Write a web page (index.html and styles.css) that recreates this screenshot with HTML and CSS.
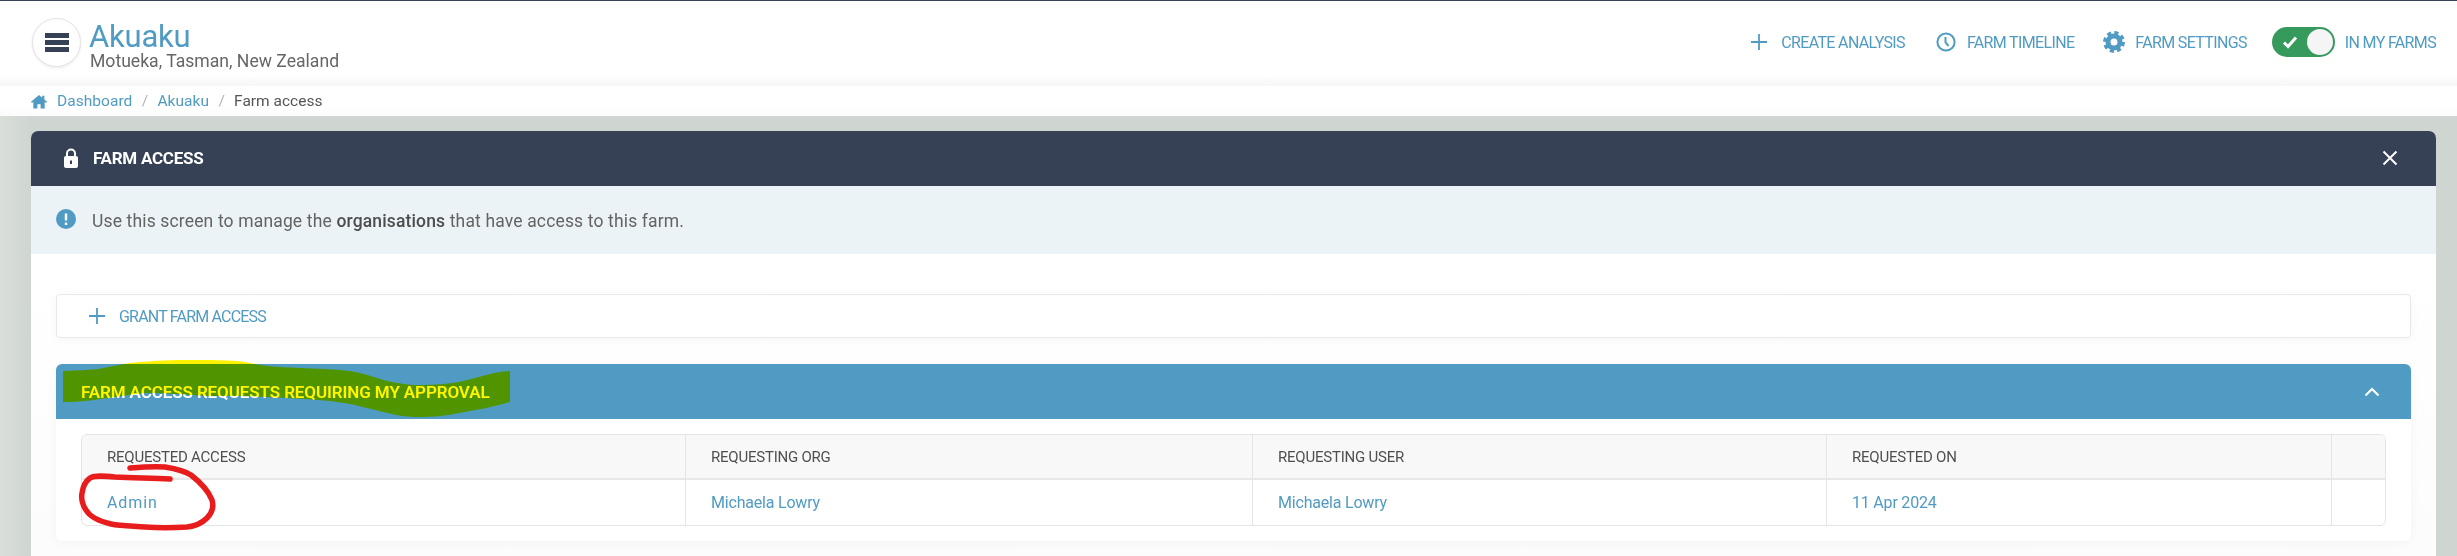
FILE: index.html
```html
<!DOCTYPE html>
<html lang="en">
<head>
<meta charset="utf-8">
<title>Farm access</title>
<link rel="stylesheet" href="styles.css">
</head>
<body>
<header class="topbar">
  <div class="farm">
    <button class="menu" aria-label="Menu"><span></span><span></span><span></span></button>
    <div class="farm-text">
      <div class="farm-name">Akuaku</div>
      <div class="farm-place">Motueka, Tasman, New Zealand</div>
    </div>
  </div>
  <nav class="actions">
    <a class="action act-create"><svg class="i-plus" viewBox="0 0 16 16"><path d="M8 0v16M0 8h16"/></svg>CREATE ANALYSIS</a>
    <a class="action act-time"><svg class="i-clock" viewBox="0 0 20 20"><circle cx="10" cy="10" r="8.6"/><path d="M9.5 5v5.5l3 3.5"/></svg>FARM TIMELINE</a>
    <a class="action act-gear"><svg class="i-gear" viewBox="0 0 22 22"><circle class="teeth" cx="11" cy="11" r="9.2"/><circle class="ring" cx="11" cy="11" r="6"/></svg>FARM SETTINGS</a>
    <div class="action act-farms">
      <span class="toggle"><svg class="i-check" viewBox="0 0 16 14"><path d="M2 7.5l4 4 8-9"/></svg><span class="knob"></span></span>
      IN MY FARMS
    </div>
  </nav>
</header>
<div class="crumbs">
  <svg class="i-home" viewBox="0 0 18 16"><path d="M9 0.6L0 8.4l1.1 1.2L2.6 8.3V16h4.6v-5h3.6v5h4.6V8.3l1.5 1.3L18 8.4l-3-2.6V1.4h-2.4v2.3z"/></svg>
  <a class="crumb">Dashboard</a><span class="sep">/</span>
  <a class="crumb">Akuaku</a><span class="sep">/</span>
  <span class="crumb-now">Farm access</span>
</div>
<main class="panel">
  <div class="panel-head">
    <svg class="i-lock" viewBox="0 0 14 20"><path class="shackle" d="M3 9V5.500a4 4 0 0 1 8 0V9"/><rect y="8" width="14" height="12" rx="2"/><rect class="hole" x="6" y="12.500" width="2" height="3.500"/></svg>
    <h1>FARM ACCESS</h1>
    <svg class="i-close" viewBox="0 0 16 16"><path d="M1.500 1.500l13 13M14.500 1.500l-13 13"/></svg>
  </div>
  <div class="info">
    <svg class="i-info" viewBox="0 0 20 20"><circle cx="10" cy="10" r="10"/><path d="M10 4.500v7M10 13.500v2.500"/></svg>
    <p>Use this screen to manage the <strong>organisations</strong> that have access to this farm.</p>
  </div>
  <div class="content">
    <a class="grant"><svg class="i-plus" viewBox="0 0 16 16"><path d="M8 0v16M0 8h16"/></svg>GRANT FARM ACCESS</a>
    <section class="requests">
      <div class="requests-head">
        <h2>FARM ACCESS REQUESTS REQUIRING MY APPROVAL</h2>
        <svg class="i-up" viewBox="0 0 16 10"><path d="M1.500 8.500L8 2l6.500 6.500"/></svg>
      </div>
      <div class="requests-body">
        <table>
          <colgroup><col class="c1"><col class="c2"><col class="c3"><col class="c4"><col></colgroup>
          <thead><tr><th>REQUESTED ACCESS</th><th>REQUESTING ORG</th><th>REQUESTING USER</th><th>REQUESTED ON</th><th></th></tr></thead>
          <tbody><tr><td><a class="access">Admin</a></td><td><a>Michaela Lowry</a></td><td><a>Michaela Lowry</a></td><td><a>11 Apr 2024</a></td><td></td></tr></tbody>
        </table>
      </div>
    </section>
  </div>
</main>
<svg class="scribbles" viewBox="0 0 2457 556" aria-hidden="true">
  <path class="highlight" d="M63 371C80 370 95 370 103 368C115 366 122 364 130 363C150 361 165 360 184 360C210 360 230 360 245 362C255 364 260 365 268 366C290 368 310 368 325 369C345 370 352 371 364 374C378 378 388 382 398 383C410 385 415 385 421 385C435 385 447 384 459 382C472 379 482 376 494 373C500 372 505 371 510 371V402C490 408 475 410 459 413C445 416 432 417 421 417C405 417 395 415 383 412C370 409 358 405 344 403C325 400 305 399 287 398C265 397 250 396 230 396C215 396 203 396 191 395C178 394 165 393 153 393C140 393 128 395 115 397C95 400 80 402 63 402Z"/>
  <path class="circle" d="M130 468C142 467 155 466 165 467C177 469 185 471 191 475C200 482 208 490 212 500C214 507 212 513 207 518C202 523 196 526 187 527C172 528 158 528 145 527C132 526 121 526 111 524C98 521 90 517 86 510C82 504 81 499 82 493C83 486 86 481 90 478C95 475 105 476 115 477C135 478 152 478 170 479"/>
</svg>
</body>
</html>
```

FILE: styles.css
```css
* { box-sizing: border-box; }
html, body { margin: 0; height: 556px; overflow: hidden; }
body {
  position: relative;
  background: linear-gradient(90deg, #d9ded9 0, #cfd5d1 31px);
  font-family: Roboto, "Noto Sans", sans-serif;
  color: #555;
}
a { color: #509bc3; text-decoration: none; }
h1, h2, p { margin: 0; }
svg { display: block; flex: none; }

.topbar {
  height: 86px;
  padding: 17px 21px 0 32px;
  border-top: 1px solid #364156;
  display: flex;
  justify-content: space-between;
  background: linear-gradient(#fff 0, #fff 74px, #f5f6f6 85px);
}
.farm { display: flex; gap: 8px; }
.menu {
  width: 49px;
  height: 49px;
  padding: 0;
  border: 1px solid #e3e3e3;
  border-radius: 50%;
  background: #fff;
  box-shadow: 0 1px 3px rgba(0,0,0,.08);
  display: flex;
  flex-direction: column;
  align-items: center;
  justify-content: center;
  gap: 2px;
}
.menu span { width: 24px; height: 5px; background: #364156; }
.farm-name { font-size: 31px; line-height: 33px; color: #509bc3; margin-top: 2px; letter-spacing: -.2px; }
.farm-place { font-size: 17.6px; line-height: 17px; color: #666; margin-left: 1px; }

.actions { display: flex; align-items: center; height: 52px; margin-top: -2px; }
.action {
  display: flex;
  align-items: center;
  font-size: 16px;
  color: #509bc3;
  letter-spacing: -.65px;
  white-space: nowrap;
}
.act-create { margin-right: 31px; }
.act-time { margin-right: 29px; }
.act-gear { margin-right: 25px; }
.act-create .i-plus { width: 16px; height: 16px; margin-right: 14px; }
.i-plus path { fill: none; stroke: #509bc3; stroke-width: 1.800; }
.i-clock { width: 20px; height: 20px; margin-right: 11px; fill: none; stroke: #509bc3; stroke-width: 2; }
.i-gear { width: 22px; height: 22px; margin-right: 10px; fill: none; stroke: #509bc3; }
.teeth { stroke-width: 3.500; stroke-dasharray: 4.100 3.127; }
.ring { stroke-width: 5; }
.toggle {
  width: 63px;
  height: 30px;
  margin-right: 10px;
  padding: 2px 2px 2px 10px;
  border-radius: 15px;
  background: #359a5b;
  display: flex;
  align-items: center;
  justify-content: space-between;
}
.i-check { width: 16px; height: 14px; fill: none; stroke: #fff; stroke-width: 3; }
.knob { width: 26px; height: 26px; border-radius: 50%; background: #f5f5f5; }

.crumbs {
  height: 30px;
  padding-left: 31px;
  display: flex;
  align-items: center;
  font-size: 15.500px;
  background: linear-gradient(#fff 0, #fff 22px, #fbfbfb 30px);
}
.i-home { width: 16px; height: 15px; margin-right: 10px; fill: #509bc3; }
.crumb { letter-spacing: .05px; }
.sep { width: 25px; text-align: center; color: #b5b5b5; }
.crumb-now { color: #555; }

.panel {
  margin: 15px 21px 0 31px;
  background: #fff;
  border-radius: 7px 7px 0 0;
  height: 425px;
}
.panel-head {
  height: 55px;
  padding: 0 38px 2px 33px;
  display: flex;
  align-items: center;
  border-radius: 7px 7px 0 0;
  background: #364156;
  color: #fff;
}
.i-lock { width: 14px; height: 20px; margin-right: 15px; fill: #fff; }
.shackle { fill: none; stroke: #fff; stroke-width: 2; }
.hole { fill: #364156; }
.panel-head h1 { flex: 1; font-size: 17px; font-weight: 700; letter-spacing: -.25px; }
.i-close { width: 16px; height: 16px; fill: none; stroke: #fff; stroke-width: 2; }

.info {
  height: 68px;
  padding-left: 25px;
  display: flex;
  align-items: center;
  gap: 16px;
  background: #ebf3f7;
  font-size: 17.500px;
  letter-spacing: .15px;
  color: #636363;
}
.info p { margin-top: 2px; }
.info strong { font-weight: 500; color: #4d4d4d; }
.i-info { width: 20px; height: 20px; margin-top: -2px; }
.i-info circle { fill: #509bc3; }
.i-info path { fill: none; stroke: #fff; stroke-width: 2.400; }

.content {
  padding: 40px 25px 0;
  height: 302px;
  background: linear-gradient(#fff 0, #fcfcfc 100%);
}
.grant {
  height: 44px;
  padding-left: 32px;
  display: flex;
  align-items: center;
  border: 1px solid #e9e9e9;
  border-radius: 4px;
  background: #fff;
  box-shadow: 0 2px 8px rgba(0,0,0,.04);
  font-size: 16px;
  letter-spacing: -.8px;
}
.grant .i-plus { width: 16px; height: 16px; margin-right: 14px; }
.requests {
  margin-top: 26px;
  height: 177px;
  border-radius: 6px;
  background: #fff;
  box-shadow: 0 2px 12px rgba(0,0,0,.04);
}
.requests-head {
  height: 55px;
  padding: 0 31px 0 25px;
  display: flex;
  align-items: center;
  justify-content: space-between;
  border-radius: 6px 6px 0 0;
  background: #509bc3;
  color: #fff;
}
.requests-head h2 { font-size: 17px; font-weight: 600; letter-spacing: -.1px; }
.i-up { width: 16px; height: 10px; fill: none; stroke: #fff; stroke-width: 2.200; }
.requests-body { padding: 15px 25px 0; }
table {
  width: 100%;
  table-layout: fixed;
  border-collapse: separate;
  border-spacing: 0;
  border: 1px solid #e5e5e5;
  border-radius: 6px;
  overflow: hidden;
}
.c1 { width: 604px; }
.c2 { width: 567px; }
.c3 { width: 574px; }
.c4 { width: 505px; }
th, td {
  padding: 0 0 0 25px;
  text-align: left;
  border-right: 1px solid #e5e5e5;
}
th:last-child, td:last-child { border-right: 0; }
th {
  height: 45px;
  background: #f8f8f8;
  border-bottom: 2px solid #e8e8e8;
  font-size: 15px;
  font-weight: 400;
  color: #4f4f4f;
  letter-spacing: -.22px;
}
td { height: 45px; font-size: 16px; letter-spacing: -.2px; }
.access { letter-spacing: .9px; }

.scribbles {
  position: absolute;
  left: 0;
  top: 0;
  width: 2457px;
  height: 556px;
  pointer-events: none;
}
.highlight { fill: #fff500; mix-blend-mode: multiply; }
.circle { fill: none; stroke: #e81c1c; stroke-width: 5.500; stroke-linecap: round; stroke-linejoin: round; }
```
